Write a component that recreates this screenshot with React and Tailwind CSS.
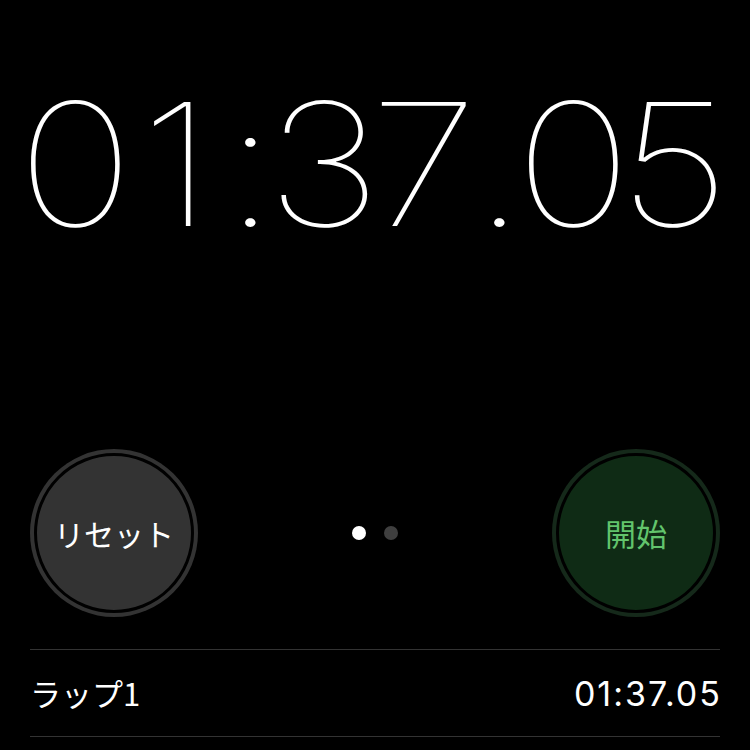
const chars = [
  { c: '0', w: 'w-[100px]', d: true },
  { c: '1', w: 'w-[100px]', d: true },
  { c: ':', w: 'w-[48px]', d: false },
  { c: '3', w: 'w-[100px]', d: true },
  { c: '7', w: 'w-[100px]', d: true },
  { c: '.', w: 'w-[50px]', d: false },
  { c: '0', w: 'w-[100px]', d: true },
  { c: '5', w: 'w-[100px]', d: true },
];

export default function App() {
  return (
    <div className="w-[750px] h-[750px] bg-black overflow-hidden flex flex-col px-[30px]" style={{ fontFamily: 'Inter, "Noto Sans CJK JP", sans-serif' }}>
      <div className="h-[449px] flex items-start justify-center pt-[78px]">
        <div className="flex text-white font-thin text-[171px] leading-none -mx-[30px]">
          {chars.map((ch, i) => (
            <span key={i} className={`${ch.w} flex justify-center`}>
              {ch.d ? (
                <span className="inline-block scale-x-[1.16] tracking-[-24px] -translate-x-[14px]">{ch.c}</span>
              ) : (
                <span className="inline-block scale-x-[1.16] tracking-[-16px] -translate-x-[9px]">{ch.c}</span>
              )}
            </span>
          ))}
        </div>
      </div>
      <div className="h-[168px] flex items-center justify-between">
        <div className="w-[168px] h-[168px] rounded-full bg-[#333333] flex items-center justify-center">
          <div className="w-[160px] h-[160px] rounded-full bg-[#333333] border-[3px] border-black flex items-center justify-center">
            <span className="text-white text-[30px]" style={{ fontFamily: '"Noto Sans CJK JP", sans-serif' }}>リセット</span>
          </div>
        </div>
        <div className="flex items-center gap-[18px]">
          <div className="w-[14px] h-[14px] rounded-full bg-white" />
          <div className="w-[14px] h-[14px] rounded-full bg-[#3f3f3f]" />
        </div>
        <div className="w-[168px] h-[168px] rounded-full bg-[#15291a] flex items-center justify-center">
          <div className="w-[160px] h-[160px] rounded-full bg-[#0f2b15] border-[3px] border-black flex items-center justify-center">
            <span className="text-[#62c46c] text-[31px]" style={{ fontFamily: '"Noto Sans CJK JP", sans-serif' }}>開始</span>
          </div>
        </div>
      </div>
      <div className="mt-[32px] border-t border-[#333333]" />
      <div className="h-[87px] flex items-center justify-between border-b border-[#333333]">
        <span className="text-white text-[31px]" style={{ fontFamily: '"Noto Sans CJK JP", sans-serif' }}>ラップ1</span>
        <span className="text-white text-[34px] font-normal tracking-[2px] -mr-[2px]">01:37.05</span>
      </div>
    </div>
  );
}
